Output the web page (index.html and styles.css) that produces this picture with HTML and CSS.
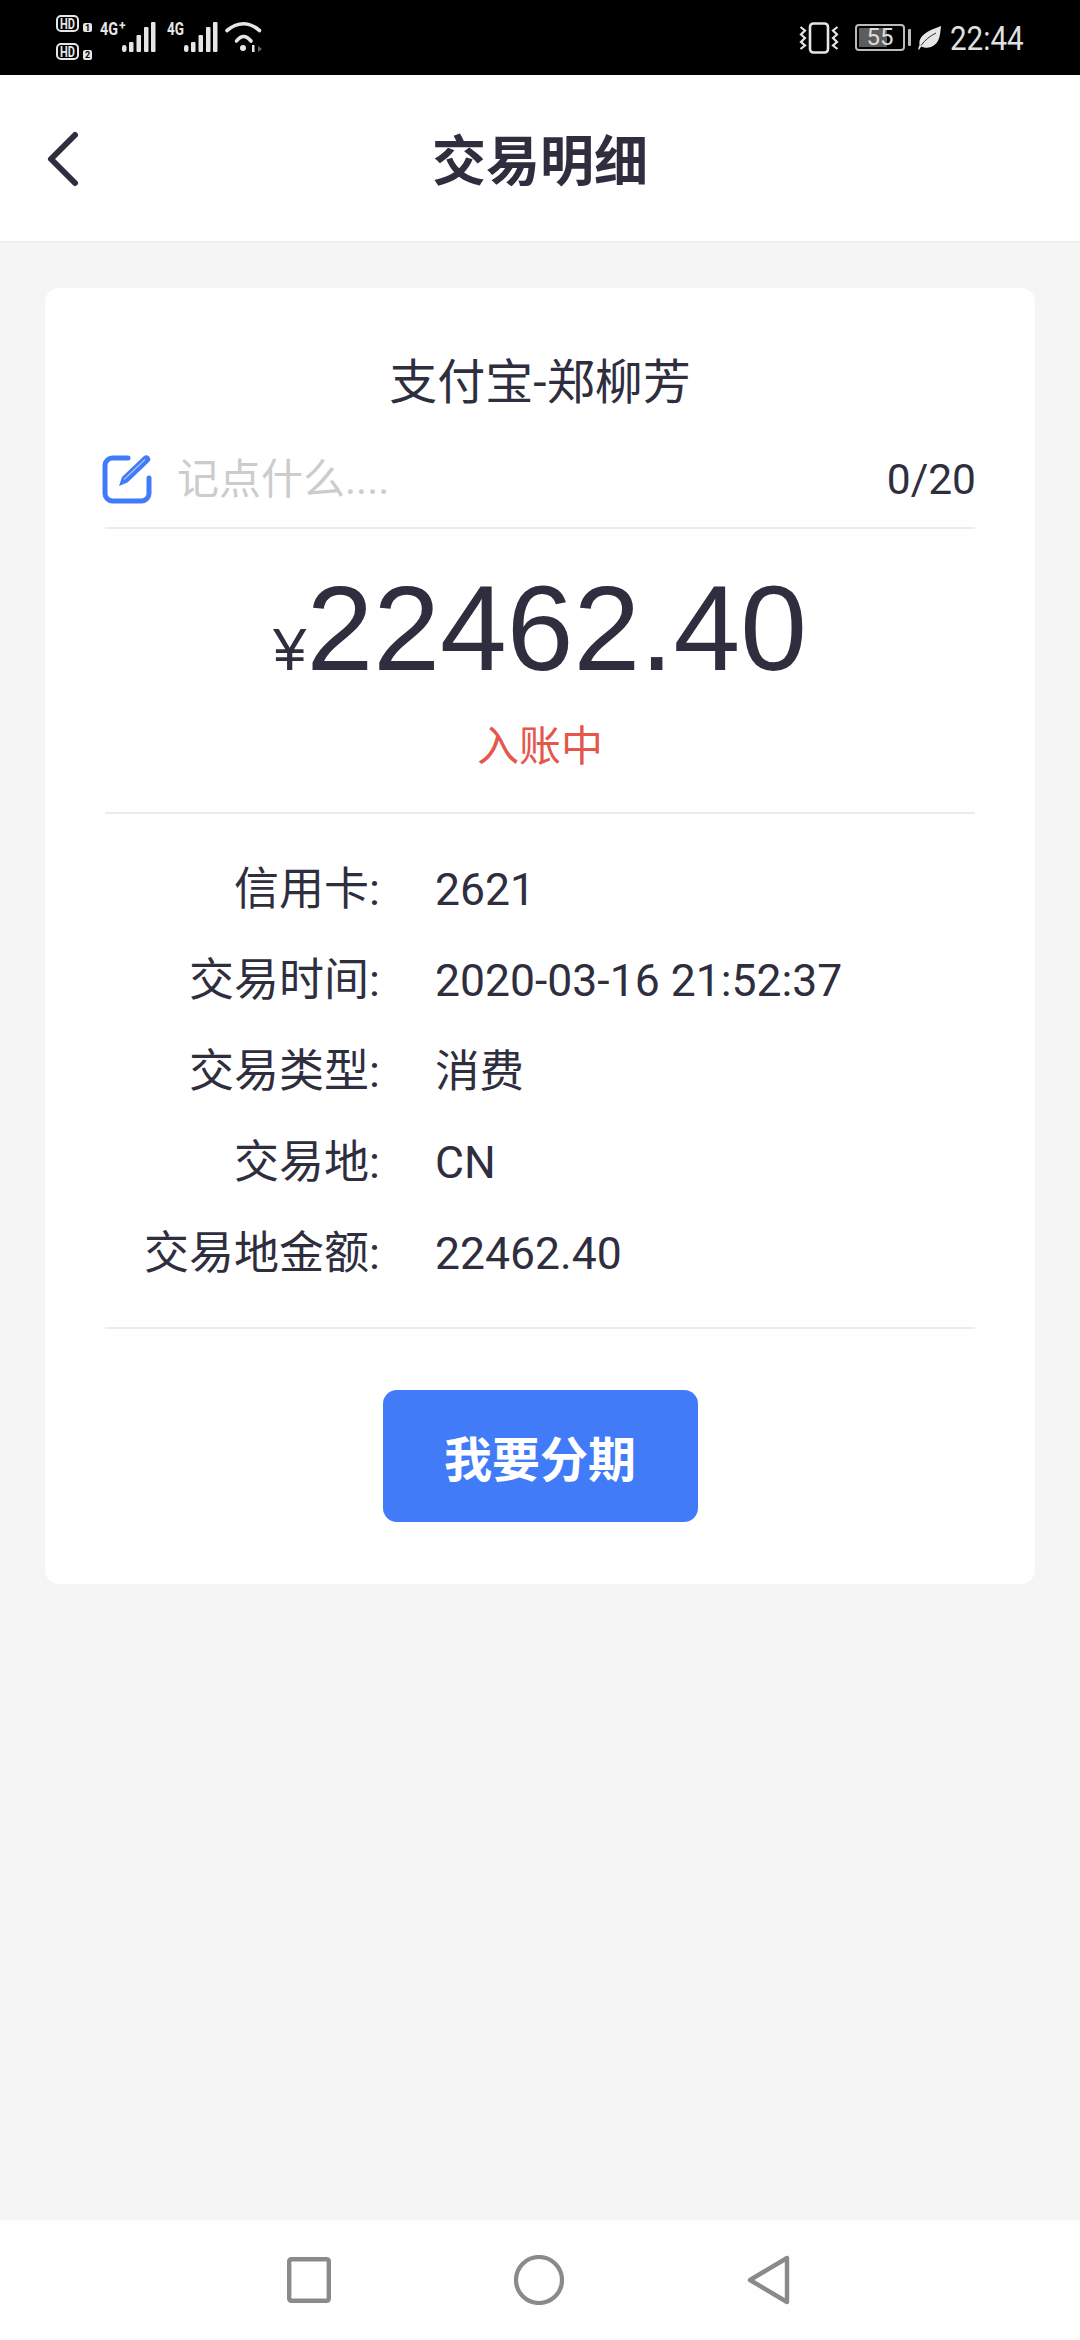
FILE: index.html
```html
<!DOCTYPE html>
<html lang="zh-CN">
<head>
<meta charset="utf-8">
<title>交易明细</title>
<link rel="stylesheet" href="styles.css">
</head>
<body>
<div class="screen">
  <div class="status">
    <svg class="signals" width="206" height="45" viewBox="0 0 206 45" fill="none">
      <rect x="1" y="1" width="21" height="15" rx="4" stroke="#e6e6e6" stroke-width="2"/>
      <text x="4" y="13.5" class="hd-text" textLength="15" lengthAdjust="spacingAndGlyphs">HD</text>
      <rect x="27" y="8" width="9" height="9" rx="2" fill="#e6e6e6"/>
      <text x="31.5" y="15.5" class="badge-text" text-anchor="middle">1</text>
      <rect x="1" y="29" width="21" height="15" rx="4" stroke="#e6e6e6" stroke-width="2"/>
      <text x="4" y="41.5" class="hd-text" textLength="15" lengthAdjust="spacingAndGlyphs">HD</text>
      <rect x="27" y="35" width="9" height="10" rx="2" fill="#e6e6e6"/>
      <text x="31.5" y="43" class="badge-text" text-anchor="middle">2</text>

      <text x="44" y="20" class="net-text" textLength="18" lengthAdjust="spacingAndGlyphs">4G</text>
      <text x="63" y="15" class="net-plus">+</text>
      <g fill="#e6e6e6">
        <rect x="66" y="30" width="4.5" height="7" rx="2.2"/>
        <rect x="73" y="27" width="4.5" height="10" rx="1"/>
        <rect x="80.5" y="20" width="4.5" height="17" rx="1"/>
        <rect x="88" y="12" width="4.5" height="25" rx="1"/>
        <rect x="95" y="7" width="4.5" height="30" rx="1"/>
      </g>

      <text x="111" y="20" class="net-text" textLength="17" lengthAdjust="spacingAndGlyphs">4G</text>
      <g fill="#e6e6e6">
        <rect x="128" y="30" width="4.5" height="7" rx="2.2"/>
        <rect x="135" y="27" width="4.5" height="10" rx="1"/>
        <rect x="142.5" y="20" width="4.5" height="17" rx="1"/>
        <rect x="150" y="12" width="4.5" height="25" rx="1"/>
        <rect x="157" y="7" width="4.5" height="30" rx="1"/>
      </g>

      <path d="M171 15.5Q187.5 2 203.5 15.5" stroke="#e6e6e6" stroke-width="3.6" stroke-linecap="round"/>
      <path d="M180.5 26Q187.5 17 195 26" stroke="#e6e6e6" stroke-width="3.6" stroke-linecap="round"/>
      <circle cx="187" cy="33" r="3" fill="#e6e6e6"/>
      <rect x="196" y="30" width="2.5" height="7" fill="#e6e6e6"/>
      <path d="M202 31 206 34 202 37Z" fill="#666"/>
    </svg>
    <div class="status-right">
      <svg class="vibrate" width="40" height="32" viewBox="0 0 40 32" fill="none" stroke="#e6e6e6">
        <rect x="11" y="1.5" width="18" height="29" rx="3.5" stroke-width="2.6"/>
        <path d="M1.5 5 6 8.500 2 12.500 6 16 2 20 6 23.500 1.500 27" stroke-width="2.200"/>
        <path d="M38.500 5 34 8.500 38 12.500 34 16 38 20 34 23.500 38.500 27" stroke-width="2.200"/>
      </svg>
      <div class="battery"><div class="battery-fill"></div><span class="battery-num">55</span></div>
      <div class="battery-cap"></div>
      <svg class="leaf" width="23" height="24" viewBox="0 0 23 24">
        <path d="M23 0C22 8 22.500 17 13 21 9 22.500 5 21.500 3.500 20.500 2 22 1.500 23.500 0.500 24 0 22 1 20.500 1.500 19 0 10 9 5 23 0Z" fill="#e6e6e6"/>
        <path d="M3 19.500C7 14 12 10 18 7" stroke="#000" stroke-width=".8" fill="none"/>
      </svg>
      <span class="clock">22:44</span>
    </div>
  </div>

  <header class="topbar">
    <svg class="back" width="34" height="58" viewBox="0 0 34 58" fill="none">
      <path d="M29 5 5 29 29 53" stroke="#2f2e3e" stroke-width="6" stroke-linecap="round" stroke-linejoin="round"/>
    </svg>
    <h1 class="title">交易明细</h1>
  </header>

  <main class="content">
    <section class="card">
      <div class="merchant">支付宝-郑柳芳</div>
      <div class="note">
        <svg class="edit" width="50" height="49" viewBox="0 0 50 49" fill="none">
          <path d="M26 3H10.500A7.500 7.500 0 0 0 3 10.500V38.500A7.500 7.500 0 0 0 10.500 46H39.500A7.500 7.500 0 0 0 47 38.500V23" stroke="#417bf7" stroke-width="5" stroke-linecap="round"/>
          <path d="M17 31 20 22 42 1Q44.500-.5 47 1.500L48 3Q49 5 47 7L25.500 27.500Z" fill="#417bf7"/>
          <path d="M22 24.500 43 4.500" stroke="#a9c4fb" stroke-width="1.200"/>
        </svg>
        <span class="note-hint">记点什么....</span>
        <span class="note-count">0/20</span>
      </div>
      <div class="amount-block">
        <div class="amount"><span class="yen">¥</span><span class="sum">22462.40</span></div>
        <div class="state">入账中</div>
      </div>
      <dl class="details">
        <div class="row"><dt>信用卡:</dt><dd>2621</dd></div>
        <div class="row"><dt>交易时间:</dt><dd>2020-03-16 21:52:37</dd></div>
        <div class="row"><dt>交易类型:</dt><dd>消费</dd></div>
        <div class="row"><dt>交易地:</dt><dd>CN</dd></div>
        <div class="row"><dt>交易地金额:</dt><dd>22462.40</dd></div>
      </dl>
      <div class="action"><button class="btn">我要分期</button></div>
    </section>
  </main>

  <nav class="navbar">
    <svg width="44" height="46" viewBox="0 0 44 46" fill="none"><rect x="2.200" y="2.200" width="39.600" height="41.600" rx="2" stroke="#8a8a8a" stroke-width="4.400"/></svg>
    <svg width="50" height="50" viewBox="0 0 50 50" fill="none"><circle cx="25" cy="25" r="23" stroke="#8a8a8a" stroke-width="4.200"/></svg>
    <svg width="43" height="50" viewBox="0 0 43 50" fill="none"><path d="M40 3V47L3 25Z" stroke="#8a8a8a" stroke-width="4.400" stroke-linejoin="round"/></svg>
  </nav>
</div>
</body>
</html>
```
FILE: styles.css
```css
* { box-sizing: border-box; }
html, body { margin: 0; padding: 0; }
body { font-family: Roboto, "Noto Sans CJK SC", sans-serif; color: #2f2e3e; }
.screen { width: 1080px; height: 2340px; display: flex; flex-direction: column; background: #f5f5f5; overflow: hidden; }

.status { height: 75px; flex: none; background: #000; color: #e6e6e6; display: flex; justify-content: space-between; align-items: center; padding: 0 57px 0 56px; }
.signals { flex: none; align-self: flex-start; margin-top: 15px; }
.hd-text { font: 700 14px Roboto, sans-serif; fill: #e6e6e6; }
.badge-text { font: 700 9px Roboto, sans-serif; fill: #000; }
.net-text { font: 700 18px Roboto, sans-serif; fill: #e6e6e6; }
.net-plus { font: 700 12px Roboto, sans-serif; fill: #e6e6e6; }
.status-right { display: flex; align-items: center; }
.vibrate { margin-right: 16px; }
.battery { position: relative; width: 50px; height: 27px; border: 2px solid #bbb; border-radius: 4px; overflow: hidden; display: flex; align-items: center; justify-content: center; }
.battery-fill { position: absolute; left: 2px; top: 2px; bottom: 2px; width: 28px; background: #5c5c5c; }
.battery-num { position: relative; font-size: 24px; color: #ddd; line-height: 23px; }
.battery-cap { width: 3px; height: 17px; background: #bbb; margin-left: 3px; margin-right: 7px; border-radius: 1px; }
.leaf { margin-right: 9px; }
.clock { display: inline-block; width: 73px; font-size: 34px; font-weight: 400; color: #e0e0e0; line-height: 34px; white-space: nowrap; transform: scaleX(.87); transform-origin: left center; }

.topbar { height: 168px; flex: none; background: #fff; border-bottom: 2px solid #eeeeee; display: flex; align-items: center; justify-content: center; position: relative; }
.back { position: absolute; left: 46px; top: 55px; }
.title { margin: 0; font: 700 54px/60px "Noto Sans CJK SC", sans-serif; color: #2f2e3e; }

.content { flex: 1; padding: 45px 45px 0; }
.card { height: 1296px; background: #fff; border-radius: 14px; padding: 0 60px; }
.merchant { padding-top: 63px; text-align: center; font: 400 48px/64px Roboto, "Noto Sans CJK SC", sans-serif; }
.note { display: flex; align-items: center; height: 114px; padding-top: 17px; border-bottom: 2px solid #ebebeb; }
.edit { flex: none; margin-left: -3px; margin-right: 25px; }
.note-hint { flex: 1; font: 400 42px/50px Roboto, "Noto Sans CJK SC", sans-serif; color: #cccccc; }
.note-count { font: 400 42.500px/50px Roboto, sans-serif; color: #2f2e3e; margin-right: -1px; }

.amount-block { height: 285px; border-bottom: 2px solid #ebebeb; text-align: center; padding-top: 34px; }
.amount { display: flex; justify-content: center; align-items: baseline; font-family: "Liberation Sans", Arial, sans-serif; height: 130px; line-height: 130px; }
.yen { font-size: 60px; }
.sum { font-size: 120px; font-weight: 400; }
.state { font: 400 42px/50px "Noto Sans CJK SC", sans-serif; color: #e5564b; margin-top: 25px; }

.details { margin: 0; padding: 30px 0 28px; border-bottom: 2px solid #ebebeb; display: flex; flex-direction: column; }
.row { display: flex; height: 91px; align-items: center; margin: 0; }
.row dt { width: 290px; margin-left: -15px; text-align: right; font: 400 45px/50px Roboto, "Noto Sans CJK SC", sans-serif; flex: none; margin-right: 55px; }
.row dd { margin: 0; font: 400 44.500px/50px Roboto, "Noto Sans CJK SC", sans-serif; }

.action { display: flex; justify-content: center; padding-top: 61px; }
.btn { width: 315px; height: 132px; border: 0; border-radius: 14px; background: #417bf7; color: #fff; font: 700 48px/60px "Noto Sans CJK SC", sans-serif; padding: 0; }

.navbar { height: 120px; flex: none; background: #fefefe; display: flex; align-items: center; padding-left: 287px; gap: 183px; }
```
